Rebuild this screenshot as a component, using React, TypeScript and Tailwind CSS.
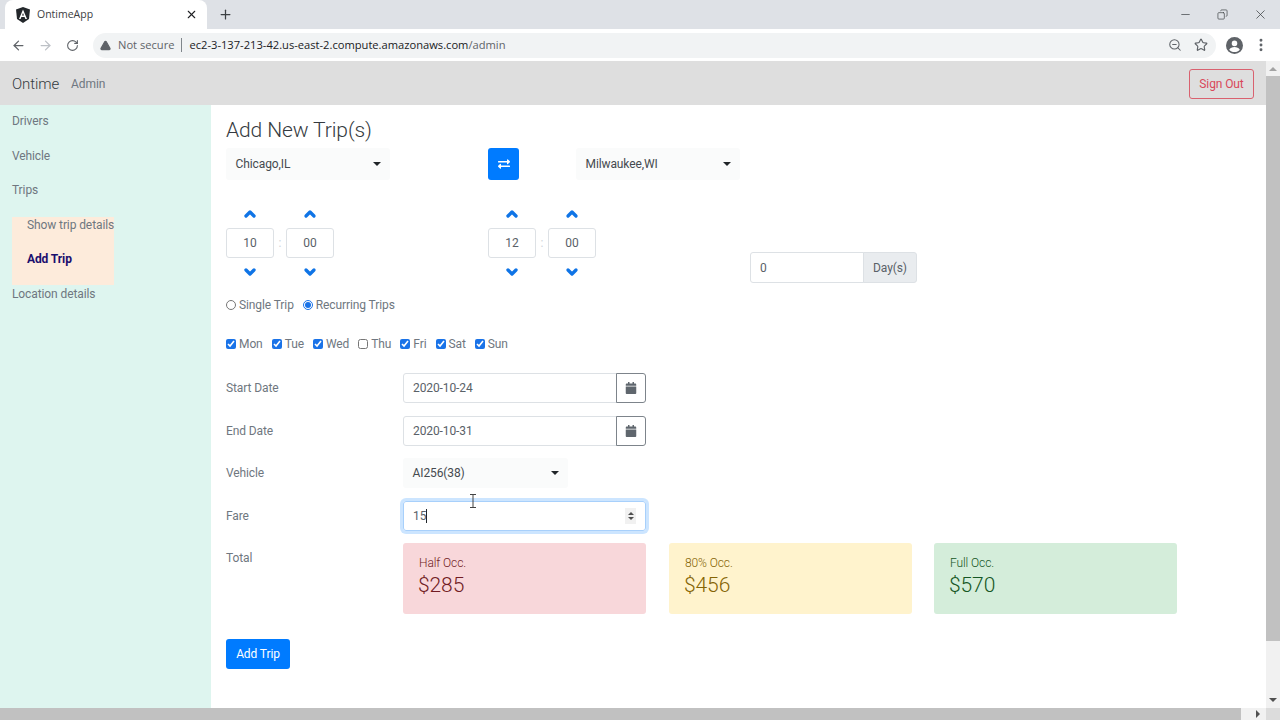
import {
  ArrowLeft,
  ArrowRight,
  RotateCw,
  Plus,
  X,
  Minus,
  Copy,
  ZoomOut,
  Star,
  TriangleAlert,
  EllipsisVertical,
  ChevronUp,
  ChevronDown,
} from "lucide-react";
import { FaExchangeAlt, FaCalendar } from "react-icons/fa";

const days = [
  { label: "Mon", checked: true },
  { label: "Tue", checked: true },
  { label: "Wed", checked: true },
  { label: "Thu", checked: false },
  { label: "Fri", checked: true },
  { label: "Sat", checked: true },
  { label: "Sun", checked: true },
];

function Caret() {
  return <span className="w-0 h-0 border-x-[4px] border-x-transparent border-t-[4px] border-t-[#212529]" />;
}

function SelectBox({ label, className }: { label: string; className: string }) {
  return (
    <div className={`flex items-center justify-between pl-[9.5px] pr-[9px] rounded-[3px] bg-[#fafbfb] text-[#454a4f] ${className}`}>
      <span>{label}</span>
      <Caret />
    </div>
  );
}

function TimeField({ value }: { value: string }) {
  return (
    <div className="flex flex-col items-center w-[48px]">
      <div className="h-[18px] flex items-center text-[#0f74e6]">
        <ChevronUp size={16} strokeWidth={5} />
      </div>
      <div className="mt-[5px] w-full h-[30px] flex items-center justify-center border border-[#dde1e5] rounded-[3px] text-[#5a6168]">
        {value}
      </div>
      <div className="mt-[5px] h-[17px] flex items-center text-[#0f74e6]">
        <ChevronDown size={16} strokeWidth={5} />
      </div>
    </div>
  );
}

function TimePicker({ hour }: { hour: string }) {
  return (
    <div className="flex items-center w-[108px]">
      <TimeField value={hour} />
      <span className="w-[12px] text-center text-[#ced4da]">:</span>
      <TimeField value="00" />
    </div>
  );
}

function DateRow({ label, value }: { label: string; value: string }) {
  return (
    <div className="flex items-center h-[30px]">
      <span className="w-[177px] text-[#6f7780]">{label}</span>
      <div className="flex w-[243px] h-full">
        <div className="flex-1 flex items-center pl-[9px] border border-[#dde1e5] rounded-l-[3px] text-[#5a6168]">{value}</div>
        <div className="w-[30px] flex items-center justify-center border border-[#7d848b] -ml-px rounded-r-[3px] text-[#5f666d] text-[12px]">
          <FaCalendar />
        </div>
      </div>
    </div>
  );
}

function TotalCard({ title, amount, className }: { title: string; amount: string; className: string }) {
  return (
    <div className={`w-[243px] h-[71px] rounded-[3px] px-[16px] pt-[12.5px] ${className}`}>
      <div className="text-[12px] leading-[14px] font-light">{title}</div>
      <div className="mt-[1.5px] -ml-px text-[21px] leading-[28px] font-light">{amount}</div>
    </div>
  );
}

export default function App() {
  return (
    <div className="w-[1280px] h-[720px] overflow-hidden flex flex-col bg-white font-['Roboto',sans-serif] text-[12px] tracking-[-0.1px]">
      {/* Browser tab strip */}
      <div className="h-[29px] bg-[#dee1e6] flex items-center font-['Open_Sans',sans-serif] tracking-normal text-[#3c4043] shrink-0">
        <div className="ml-[5px] w-[202px] h-full bg-white rounded-t-lg flex items-center pl-[11px] pr-[9px]">
          <svg width="14" height="16" viewBox="0 0 14 16">
            <path d="M7 0 14 2.5 13 12 7 16 1 12 0 2.5Z" fill="#23272b" />
            <path d="M7 2.5 3 12h1.6l.8-2h3.2l.8 2H11ZM6 8.6 7 6l1 2.6Z" fill="#fff" />
          </svg>
          <span className="ml-[7px] text-[10.5px] flex-1">OntimeApp</span>
          <X size={13} strokeWidth={2} color="#202124" />
        </div>
        <Plus size={15} strokeWidth={2} color="#3c4043" className="ml-[11px]" />
        <div className="ml-auto flex items-center text-[#3c4043]">
          <Minus size={13} strokeWidth={1.3} />
          <Copy size={11} strokeWidth={1.5} className="ml-[25px] -scale-x-100" />
          <X size={15} strokeWidth={1.2} className="ml-[25px] mr-[12px]" />
        </div>
      </div>

      {/* Browser toolbar */}
      <div className="h-[32px] bg-white flex items-center font-['Open_Sans',sans-serif] tracking-normal shrink-0">
        <ArrowLeft size={15} strokeWidth={2} color="#5f6368" className="ml-[11px]" />
        <ArrowRight size={15} strokeWidth={2} color="#bdc1c6" className="ml-[12px]" />
        <RotateCw size={13} strokeWidth={2} color="#5f6368" className="ml-[13px]" />
        <div className="ml-[14px] w-[1123px] h-[25px] rounded-full bg-[#f1f3f4] flex items-center pl-[7px] text-[11.15px]">
          <TriangleAlert size={11} strokeWidth={2.5} color="#5f6368" fill="#5f6368" />
          <span className="ml-[7px] text-[#5f6368]">Not secure</span>
          <span className="ml-[6px] w-px h-[14px] bg-[#80868b]" />
          <span className="ml-[8px] text-[#202124]">
            ec2-3-137-213-42.us-east-2.compute.amazonaws.com<span className="text-[#5f6368]">/admin</span>
          </span>
          <div className="ml-auto flex items-center mr-[8px]">
            <ZoomOut size={14} strokeWidth={1.8} color="#5f6368" />
            <Star size={14} strokeWidth={2} color="#5f6368" className="ml-[12px]" />
          </div>
        </div>
        <svg width="17" height="17" viewBox="0 0 16 16" className="ml-[10px]">
          <circle cx="8" cy="8" r="8" fill="#5f6368" />
          <circle cx="8" cy="6" r="2.6" fill="#fff" />
          <path d="M3 12c.8-1.8 3-2.6 5-2.6s4.2.8 5 2.6c-1.2 1.4-3 2.2-5 2.2S4.200 13.400 3 12Z" fill="#fff" />
        </svg>
        <EllipsisVertical size={16} strokeWidth={2.4} color="#5f6368" className="ml-[10px]" />
      </div>

      <div className="flex-1 min-h-0 flex">
        <div className="flex-1 min-w-0 flex flex-col">
          {/* App navbar */}
          <div className="h-[44px] bg-[#dedede] flex items-center pt-[2px] pl-[12px] pr-[12px] shrink-0">
            <span className="text-[15px] font-light text-[#343a40]">Ontime</span>
            <span className="ml-[12px] text-[#6f7780]">Admin</span>
            <div className="ml-auto w-[65px] h-[30px] flex items-center justify-center border border-[#d9616f] rounded-[3px] text-[#d9485a]">
              Sign Out
            </div>
          </div>

          <div className="flex-1 min-h-0 flex">
            {/* Sidebar */}
            <div className="w-[211px] bg-[#def5ef] flex flex-col text-[#6f7780] leading-[20px] pl-[12px] shrink-0">
              <div className="mt-[6px]">Drivers</div>
              <div className="mt-[14.5px]">Vehicle</div>
              <div className="mt-[14.5px]">Trips</div>
              <div className="mt-[17px] w-[102px] h-[68px] bg-[#fdebdb] pl-[15px] leading-[16px]">
                <div className="whitespace-nowrap">Show trip details</div>
                <div className="mt-[18px] font-bold text-[#1a0f6e]">Add Trip</div>
              </div>
              <div className="mt-[-1px]">Location details</div>
            </div>

            {/* Form */}
            <div className="flex-1 min-w-0 pl-[15px] flex flex-col items-start relative">
              <h3 className="mt-[10px] h-[31px] leading-[31px] text-[21px] font-light text-[#343a40]">Add New Trip(s)</h3>

              <div className="mt-[2px] flex h-[32px]">
                <SelectBox label="Chicago,IL" className="w-[164px]" />
                <div className="ml-[98px] w-[31px] bg-[#007bff] rounded-[3px] flex items-center justify-center text-white text-[12px]">
                  <FaExchangeAlt />
                </div>
                <SelectBox label="Milwaukee,WI" className="ml-[57px] w-[164px]" />
              </div>

              <div className="mt-[25px] flex h-[75px]">
                <TimePicker hour="10" />
                <div className="ml-[154px]">
                  <TimePicker hour="12" />
                </div>
                <div className="ml-[154px] mt-[47px] w-[167px] h-[31px] flex">
                  <div className="flex-1 flex items-center pl-[9px] border border-[#dde1e5] rounded-l-[3px] text-[#5a6168]">0</div>
                  <div className="w-[54px] flex items-center justify-center bg-[#e9ecef] border border-[#dde1e5] -ml-px rounded-r-[3px] text-[#5a6168]">
                    Day(s)
                  </div>
                </div>
              </div>

              <div className="mt-[17px] h-[16px] flex items-center text-[#6f7780]">
                <input type="radio" name="trip" readOnly className="m-0 w-[10px] h-[10px] accent-[#1a73e8]" />
                <span className="ml-[3px]">Single Trip</span>
                <input type="radio" name="trip" readOnly checked className="ml-[9px] m-0 w-[10px] h-[10px] accent-[#1a73e8]" />
                <span className="ml-[3px]">Recurring Trips</span>
              </div>

              <div className="mt-[23px] h-[16px] flex items-center gap-x-[9px] text-[#6f7780]">
                {days.map((d) => (
                  <label key={d.label} className="flex items-center gap-x-[3px]">
                    <input type="checkbox" readOnly checked={d.checked} className="m-0 w-[10px] h-[10px] accent-[#1a73e8]" />
                    {d.label}
                  </label>
                ))}
              </div>

              <div className="mt-[21px] flex flex-col gap-y-[12.5px]">
                <DateRow label="Start Date" value="2020-10-24" />
                <DateRow label="End Date" value="2020-10-31" />
                <div className="flex items-center h-[30px]">
                  <span className="w-[177px] text-[#6f7780]">Vehicle</span>
                  <SelectBox label="AI256(38)" className="w-[165px] h-full" />
                </div>
                <div className="flex items-center h-[30px]">
                  <span className="w-[177px] text-[#6f7780]">Fare</span>
                  <div className="w-[243px] h-[30px] flex items-center pl-[9px] pr-[9px] border border-[#a8d0fb] rounded-[3px] ring-[3px] ring-[#007bff]/20 text-[#5a6168]">
                    <span>15</span>
                    <span className="w-px h-[14px] bg-[#212529]" />
                    <div className="ml-auto w-[11px] h-[16px] bg-[#f1f1f1] flex flex-col items-center justify-center gap-y-[2px]">
                      <span className="w-0 h-0 border-x-[3px] border-x-transparent border-b-[3px] border-b-[#505050]" />
                      <span className="w-0 h-0 border-x-[3px] border-x-transparent border-t-[3px] border-t-[#505050]" />
                    </div>
                  </div>
                </div>
              </div>

              <div className="mt-[12.5px] flex">
                <span className="w-[177px] mt-[7px] leading-[16px] text-[#6f7780]">Total</span>
                <TotalCard title="Half Occ." amount="$285" className="bg-[#f8d7da] text-[#721c24]" />
                <TotalCard title="80% Occ." amount="$456" className="ml-[23px] bg-[#fff3cd] text-[#856404]" />
                <TotalCard title="Full Occ." amount="$570" className="ml-[22px] bg-[#d4edda] text-[#155724]" />
              </div>

              <div className="mt-[25px] w-[64px] h-[30px] bg-[#007bff] rounded-[3px] flex items-center justify-center text-white">
                Add Trip
              </div>

              {/* mouse text cursor */}
              <svg width="8" height="14" viewBox="0 0 8 14" className="absolute left-[258px] top-[389px]" fill="none" stroke="#444" strokeWidth="1">
                <path d="M1 .5h6M1 13.5h6M4 .5v13" />
              </svg>
            </div>
          </div>
        </div>

        {/* Vertical scrollbar */}
        <div className="w-[14px] bg-[#f1f1f1] flex flex-col items-center shrink-0">
          <span className="mt-[6px] w-0 h-0 border-x-[4px] border-x-transparent border-b-[4px] border-b-[#a3a3a3]" />
          <div className="mt-[5px] w-full h-[565px] bg-[#c1c1c1]" />
          <span className="mt-auto mb-[6px] w-0 h-0 border-x-[4px] border-x-transparent border-t-[4px] border-t-[#505050]" />
        </div>
      </div>

      {/* Horizontal scrollbar */}
      <div className="h-[12px] bg-[#f1f1f1] flex items-center shrink-0">
        <div className="w-[1241px] h-full bg-[#c1c1c1]" />
        <span className="ml-[15px] w-0 h-0 border-y-[4px] border-y-transparent border-l-[4px] border-l-[#505050]" />
        <div className="ml-auto w-[14px] h-full bg-[#dcdcdc]" />
      </div>
    </div>
  );
}
